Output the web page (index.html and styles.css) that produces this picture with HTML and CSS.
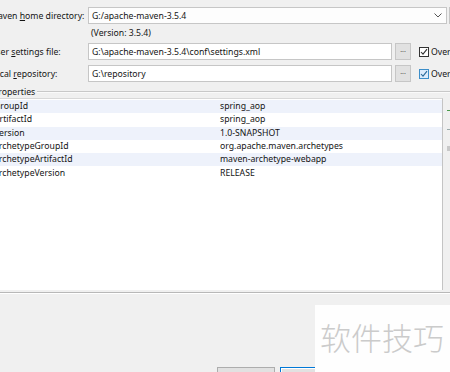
FILE: index.html
```html
<!DOCTYPE html>
<html lang="en">
<head>
    <meta charset="UTF-8">
    <meta name="viewport" content="width=device-width, initial-scale=1.0">
    <title>New Maven Project</title>
    <link rel="stylesheet" href="styles.css">
</head>
<body>
    <div class="dialog">
        <div class="settings">
            <div class="row">
                <label class="label">Maven <u>h</u>ome directory:</label>
                <div class="combo">
                    <span>G:/apache-maven-3.5.4</span>
                    <svg class="chevron" width="8" height="5" viewBox="0 0 8 5"><path d="M0.5 0.5 L4 4 L7.5 0.5" fill="none" stroke="#555" stroke-width="1"/></svg>
                </div>
                <button class="browse side">...</button>
            </div>
            <div class="version">(Version: 3.5.4)</div>
            <div class="row">
                <label class="label">User <u>s</u>ettings file:</label>
                <div class="field">G:\apache-maven-3.5.4\conf\settings.xml</div>
                <button class="browse">...</button>
                <label class="check">
                    <span class="box">
                        <svg width="8" height="8" viewBox="0 0 8 8"><path d="M1 4 L3 6.2 L7 1.2" fill="none" stroke="#333" stroke-width="1.1"/></svg>
                    </span>Override
                </label>
            </div>
            <div class="row">
                <label class="label">Local <u>r</u>epository:</label>
                <div class="field">G:\repository</div>
                <button class="browse">...</button>
                <label class="check">
                    <span class="box hot">
                        <svg width="8" height="8" viewBox="0 0 8 8"><path d="M1 4 L3 6.2 L7 1.2" fill="none" stroke="#2a6a9a" stroke-width="1.1"/></svg>
                    </span>Override
                </label>
            </div>
        </div>

        <div class="group">
            <div class="group-title">
                <span>Properties</span>
                <i class="group-line"></i>
            </div>
            <div class="group-body">
                <div class="props">
                    <table>
                        <tbody>
                            <tr class="alt"><td>GroupId</td><td>spring_aop</td></tr>
                            <tr><td>ArtifactId</td><td>spring_aop</td></tr>
                            <tr class="alt"><td>Version</td><td>1.0-SNAPSHOT</td></tr>
                            <tr><td>archetypeGroupId</td><td>org.apache.maven.archetypes</td></tr>
                            <tr class="alt"><td>archetypeArtifactId</td><td>maven-archetype-webapp</td></tr>
                            <tr><td>archetypeVersion</td><td>RELEASE</td></tr>
                        </tbody>
                    </table>
                </div>
                <div class="tools">
                    <span class="tool add"></span>
                    <span class="tool remove"></span>
                    <span class="tool edit"></span>
                </div>
            </div>
        </div>

        <div class="footer">
            <button class="btn">Previous</button>
            <button class="btn primary">Next</button>
            <button class="btn">Finish</button>
        </div>
    </div>

    <div class="watermark">软件技巧</div>
</body>
</html>
```

FILE: styles.css
```css
:root {
    --dialog-bg: #f0f0f0;
    --text-color: #141414;
    --field-border: #c6c6c6;
    --button-bg: #e1e1e1;
    --button-border: #adadad;
    --row-alt: #eef2fb;
    --accent: #0078d7;
}

body {
    margin: 0;
    width: 450px;
    height: 372px;
    overflow: hidden;
    background-color: var(--dialog-bg);
    color: var(--text-color);
    font-family: 'Noto Sans', 'Noto Sans CJK SC', sans-serif;
    font-size: 8.7px;
    position: relative;
}

.dialog {
    margin-left: -10px;
    width: 470px;
}

.settings {
    padding-top: 7px;
}

.row {
    display: flex;
    align-items: center;
    height: 17px;
}

.row + .row {
    margin-top: 5px;
}

.label {
    width: 98px;
    flex: none;
    white-space: nowrap;
}

.combo,
.field {
    box-sizing: border-box;
    height: 17px;
    border: 1px solid var(--field-border);
    background: white;
    padding: 0 3px;
    display: flex;
    align-items: center;
    white-space: nowrap;
    overflow: hidden;
    flex: none;
}

.combo {
    width: 359px;
    justify-content: space-between;
    background: #fdfdfd;
}

.chevron {
    margin-right: 1px;
}

.field {
    width: 304px;
}

.browse {
    box-sizing: border-box;
    width: 16px;
    height: 17px;
    margin-left: 3px;
    padding: 0 0 4px;
    border: 1px solid var(--field-border);
    background: var(--button-bg);
    color: #555;
    font: inherit;
    font-size: 7px;
    flex: none;
}

.browse.side {
    margin-left: 2px;
    color: transparent;
}

.check {
    display: flex;
    align-items: center;
    margin-left: 8px;
    white-space: nowrap;
}

.box {
    box-sizing: border-box;
    width: 10px;
    height: 10px;
    border: 1px solid #333;
    background: white;
    display: flex;
    align-items: center;
    justify-content: center;
    margin-right: 2px;
}

.box.hot {
    border-color: #3d8ec9;
    background: #dcecfc;
}

.version {
    height: 19px;
    line-height: 19px;
    padding-left: 101px;
}

.group {
    margin-top: 4px;
}

.group-title {
    display: flex;
    align-items: center;
    height: 12px;
    padding-left: 3px;
}

.group-line {
    flex: 1;
    margin-left: 2px;
    border-top: 1px solid #c8c8c8;
    border-bottom: 1px solid #fafafa;
}

.group-body {
    display: flex;
}

.props {
    box-sizing: border-box;
    width: 453px;
    height: 192px;
    background: white;
    border-top: 1px solid #d8d8d8;
    border-right: 1px solid #c4c4c4;
    flex: none;
}

table {
    width: 100%;
    border-collapse: collapse;
    margin-top: 1px;
}

td {
    height: 13.3px;
    padding: 0 0 0 4px;
    line-height: 13px;
    white-space: nowrap;
}

td:first-child {
    width: 222px;
}

tr.alt td {
    background-color: var(--row-alt);
}

.tools {
    display: flex;
    flex-direction: column;
    margin-left: 4px;
    padding-top: 9px;
    gap: 11px;
}

.tool {
    width: 8px;
    height: 8px;
    position: relative;
}

.tool::before {
    content: '';
    position: absolute;
    left: 0;
    top: 3px;
    width: 8px;
    height: 1px;
    background: #9aa;
}

.tool.add::before {
    background: #4a9a4a;
}

.tool.edit::before {
    top: 1px;
    height: 5px;
    width: 3px;
    background: #c8c8c8;
}

.footer {
    margin-top: 2px;
    border-top: 1px solid #b8b8b8;
    box-shadow: inset 0 1px 0 #fff;
    padding-top: 74px;
    padding-left: 227px;
    display: flex;
    gap: 5px;
}

.btn {
    box-sizing: border-box;
    width: 58px;
    height: 22px;
    border: 1px solid var(--button-border);
    background: var(--button-bg);
    font: inherit;
    color: var(--text-color);
    padding: 0;
    flex: none;
}

.btn.primary {
    border: 1px solid var(--accent);
    box-shadow: inset 0 0 0 1px #fff;
}

.watermark {
    position: absolute;
    left: 315px;
    top: 305px;
    width: 135px;
    height: 67px;
    background: #fefefe;
    color: #cbcbcb;
    font-family: 'Noto Sans CJK SC', sans-serif;
    font-size: 31px;
    font-weight: 300;
    line-height: 64px;
    padding-left: 5px;
    box-sizing: border-box;
    white-space: nowrap;
}
```
